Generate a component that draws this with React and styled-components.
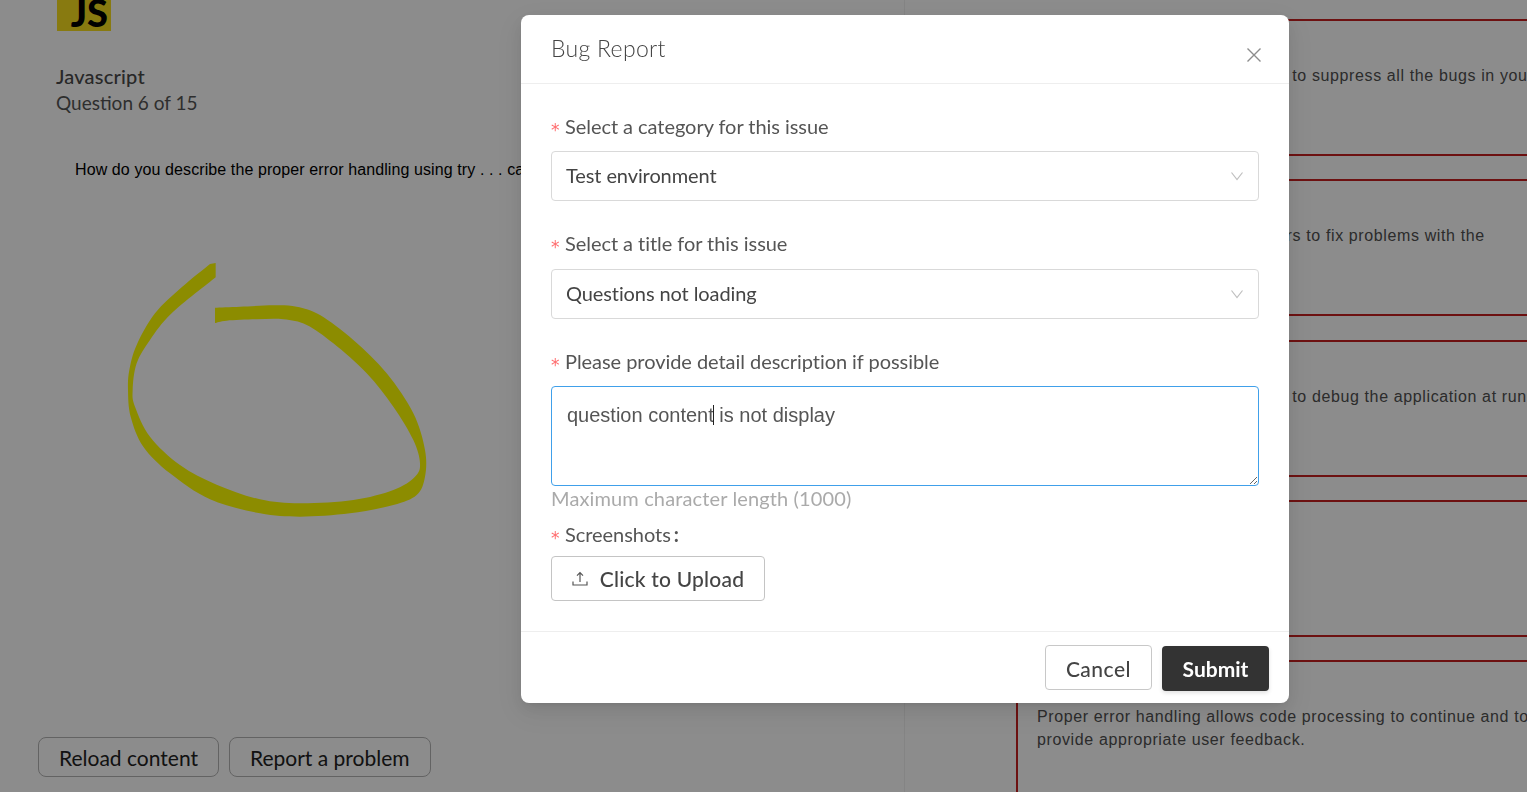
import styled, { createGlobalStyle } from "styled-components";

const UI_FONT = `"Lato", "Open Sans", sans-serif`;

const GlobalStyle = createGlobalStyle`
    * { box-sizing: border-box; }
    html, body { margin: 0; padding: 0; height: 100%; overflow: hidden; background: #fff; }
    body { font-family: ${UI_FONT}; }
`;

// hand-traced highlighter stroke, coordinates in the 1020x840 viewBox
const OUTER = [[330,42],[245,112],[165,190],[110,285],[88,360],[84,420],[92,500],[130,590],[210,670],[330,748],[480,790],[600,800],[750,790],[880,765],[950,735],[975,680],[975,600],[940,490],[860,370],[760,270],[660,195],[590,170],[520,166],[420,170],[345,173]];
const INNER = [[345,219],[380,212],[470,208],[550,208],[620,225],[700,280],[800,370],[880,470],[940,570],[960,640],[945,680],[880,720],[760,750],[600,760],[480,748],[350,704],[240,645],[150,560],[105,470],[98,420],[110,340],[150,270],[215,190],[347,82]];

const smooth = (pts) => {
    let d = "";
    for (let i = 0; i < pts.length - 1; i++) {
        const p0 = pts[i - 1] || pts[i];
        const p1 = pts[i];
        const p2 = pts[i + 1];
        const p3 = pts[i + 2] || p2;
        const c1 = [p1[0] + (p2[0] - p0[0]) / 6, p1[1] + (p2[1] - p0[1]) / 6];
        const c2 = [p2[0] - (p3[0] - p1[0]) / 6, p2[1] - (p3[1] - p1[1]) / 6];
        d += `C${c1[0]} ${c1[1]} ${c2[0]} ${c2[1]} ${p2[0]} ${p2[1]}`;
    }
    return d;
};
const strokePath = `M347 39L330 42${smooth(OUTER)}L345 219${smooth(INNER)}Z`;

const OPTIONS = [
    "Proper error handling allows you to suppress all the bugs in your application code.",
    "Error handling enables developers to fix problems with the application.",
    "Proper error handling allows you to debug the application at run time.",
    "Proper error handling is needed",
    "Proper error handling allows code processing to continue and to provide appropriate user feedback.",
];

export default function App() {
    return (
        <>
            <GlobalStyle />
            <Screen>
                <LeftPanel>
                    <JsLogo>JS</JsLogo>
                    <Subject>Javascript</Subject>
                    <Progress>Question 6 of 15</Progress>
                    <QuestionText>How do you describe the proper error handling using try . . . catch statements?</QuestionText>
                    <Drawing viewBox="0 0 1020 840">
                        <path d={strokePath} fill="#ffff00" />
                    </Drawing>
                    <LeftActions>
                        <GhostButton>Reload content</GhostButton>
                        <GhostButton>Report a problem</GhostButton>
                    </LeftActions>
                </LeftPanel>
                <RightPanel>
                    {OPTIONS.map((text) => (
                        <OptionBox key={text}>{text}</OptionBox>
                    ))}
                </RightPanel>
            </Screen>
            <Overlay>
                <Modal>
                    <ModalHeader>
                        <ModalTitle>Bug Report</ModalTitle>
                        <CloseIcon viewBox="0 0 16 16">
                            <path d="M1.5 1.5 14.5 14.5M14.5 1.5 1.5 14.5" />
                        </CloseIcon>
                    </ModalHeader>
                    <ModalBody>
                        <Label $gap={14}>Select a category for this issue</Label>
                        <SelectBox>
                            <span>Test environment</span>
                            <Chevron viewBox="0 0 14 10">
                                <path d="M1.5 1.5 7 8.5 12.5 1.5" />
                            </Chevron>
                        </SelectBox>
                        <Label $top={31} $gap={15}>Select a title for this issue</Label>
                        <SelectBox>
                            <span>Questions not loading</span>
                            <Chevron viewBox="0 0 14 10">
                                <path d="M1.5 1.5 7 8.5 12.5 1.5" />
                            </Chevron>
                        </SelectBox>
                        <Label $top={31} $gap={14}>Please provide detail description if possible</Label>
                        <TextAreaWrap>
                            <TextArea defaultValue="question content is not display" />
                            <Caret />
                        </TextAreaWrap>
                        <Hint>Maximum character length (1000)</Hint>
                        <Label $top={14} $gap={11}>Screenshots<Colon>:</Colon></Label>
                        <UploadButton>
                            <UploadIcon viewBox="0 0 16 16">
                                <path d="M8 11V2M5 4.6 8 1.6l3 3M1 10.5V14h14v-3.5" />
                            </UploadIcon>
                            Click to Upload
                        </UploadButton>
                    </ModalBody>
                    <ModalFooter>
                        <CancelButton>Cancel</CancelButton>
                        <SubmitButton>Submit</SubmitButton>
                    </ModalFooter>
                </Modal>
            </Overlay>
        </>
    );
}

const Screen = styled.div`
    display: flex;
    height: 792px;
    overflow: hidden;
    background: #fff;
`;
const LeftPanel = styled.div`
    width: 905px;
    flex: none;
    display: flex;
    flex-direction: column;
    padding: 0 0 15px 56px;
    border-right: 1px solid #f0f0f0;
`;
const JsLogo = styled.div`
    width: 54px;
    height: 31px;
    margin-left: 1px;
    background: #f7df1e;
    color: #000;
    font-family: "Lato", sans-serif;
    font-weight: 900;
    font-size: 38px;
    line-height: 24px;
    text-align: right;
    padding-right: 3px;
    overflow: hidden;
`;
const Subject = styled.div`
    margin-top: 32px;
    font-size: 20px;
    line-height: 26px;
    letter-spacing: 0.2px;
    font-weight: 500;
    color: #4a4a4a;
`;
const Progress = styled.div`
    margin-top: 1px;
    font-size: 19px;
    line-height: 26px;
    color: #555;
`;
const QuestionText = styled.div`
    margin: 44px 0 0 19px;
    white-space: nowrap;
    font-family: "Liberation Sans", Arial, sans-serif;
    font-size: 16px;
    line-height: 20px;
    letter-spacing: 0.1px;
    color: #000;
`;
const Drawing = styled.svg`
    display: block;
    width: 340px;
    height: 280px;
    margin: 70px 0 0 44px;
`;
const LeftActions = styled.div`
    margin: auto 0 0 -18px;
    display: flex;
    gap: 10px;
`;
const GhostButton = styled.button`
    height: 40px;
    padding: 1px 20px 0;
    background: #fff;
    border: 1px solid #b5b5b5;
    border-radius: 8px;
    font-family: ${UI_FONT};
    font-size: 21px;
    color: #222;
`;
const RightPanel = styled.div`
    flex: 1;
    min-width: 0;
    display: flex;
    flex-direction: column;
    gap: 23.25px;
    padding: 19px 0 0 111px;
`;
const OptionBox = styled.div`
    flex: none;
    width: 550px;
    height: 137px;
    padding: 43px 30px 0 19px;
    border: 2px solid #c62020;
    font-family: "Liberation Sans", Arial, sans-serif;
    font-size: 16px;
    line-height: 23px;
    letter-spacing: 0.62px;
    color: #505050;
`;
const Overlay = styled.div`
    position: fixed;
    inset: 0;
    padding: 15px 0 0 521px;
    background: rgba(0, 0, 0, 0.45);
`;
const Modal = styled.div`
    width: 768px;
    height: 688px;
    display: flex;
    flex-direction: column;
    background: #fff;
    border-radius: 8px;
    box-shadow: 0 6px 16px rgba(0, 0, 0, 0.08), 0 3px 6px -4px rgba(0, 0, 0, 0.12), 0 9px 28px 8px rgba(0, 0, 0, 0.05);
`;
const ModalHeader = styled.div`
    position: relative;
    height: 69px;
    flex: none;
    padding: 20px 30px 0;
    border-bottom: 1px solid #eee;
`;
const ModalTitle = styled.div`
    font-size: 23px;
    font-weight: 300;
    line-height: 26px;
    letter-spacing: 0.3px;
    color: #444;
`;
const CloseIcon = styled.svg`
    position: absolute;
    top: 32px;
    right: 27px;
    width: 16px;
    height: 16px;
    fill: none;
    stroke: #8c8c8c;
    stroke-width: 1.4;
`;
const ModalBody = styled.div`
    flex: 1;
    padding: 31px 30px 0;
`;
const Label = styled.div`
    height: 22px;
    margin: ${(p) => p.$top || 0}px 0 ${(p) => p.$gap || 13}px;
    font-size: 20px;
    line-height: 22px;
    letter-spacing: -0.05px;
    color: #555;
    &::before {
        content: "*";
        display: inline-block;
        width: 14px;
        line-height: 1;
        vertical-align: -2px;
        color: #ff6b6d;
        font-family: "DejaVu Sans", sans-serif;
        font-size: 17px;
    }
`;
const Colon = styled.span`
    margin-left: 3px;
    font-weight: 700;
`;
const SelectBox = styled.div`
    height: 50px;
    display: flex;
    align-items: center;
    justify-content: space-between;
    padding: 0 14px;
    border: 1px solid #d9d9d9;
    border-radius: 4px;
    font-size: 20px;
    letter-spacing: -0.1px;
    color: #444;
    & > span {
        margin-top: -2px;
    }
`;
const Chevron = styled.svg`
    width: 14px;
    height: 10px;
    fill: none;
    stroke: #bfbfbf;
    stroke-width: 1.2;
`;
const TextAreaWrap = styled.div`
    position: relative;
    height: 100px;
`;
const TextArea = styled.textarea`
    display: block;
    width: 100%;
    height: 100%;
    padding: 15px;
    border: 1px solid #40a0ea;
    border-radius: 4px;
    outline: none;
    font-family: "Liberation Sans", Arial, sans-serif;
    font-size: 20px;
    line-height: 26px;
    color: #555;
`;
const Caret = styled.span`
    position: absolute;
    left: 162px;
    top: 19px;
    width: 1px;
    height: 20px;
    background: #222;
`;
const Hint = styled.div`
    margin-top: 1px;
    font-size: 20px;
    line-height: 22px;
    letter-spacing: 0.13px;
    color: #aaa;
`;
const UploadButton = styled.button`
    width: 214px;
    height: 45px;
    display: flex;
    align-items: center;
    justify-content: center;
    gap: 12px;
    background: #fff;
    border: 1px solid #c4c4c4;
    border-radius: 4px;
    font-family: ${UI_FONT};
    font-size: 21px;
    letter-spacing: 0.2px;
    font-weight: 500;
    color: #444;
`;
const UploadIcon = styled.svg`
    width: 16px;
    height: 16px;
    fill: none;
    stroke: #555;
    stroke-width: 1.2;
`;
const ModalFooter = styled.div`
    height: 72px;
    flex: none;
    display: flex;
    justify-content: flex-end;
    align-items: flex-start;
    gap: 10px;
    padding: 13px 20px 0 0;
    border-top: 1px solid #eee;
`;
const CancelButton = styled.button`
    width: 107px;
    height: 45px;
    padding-top: 2px;
    background: #fff;
    border: 1px solid #c8c8c8;
    border-radius: 4px;
    font-family: ${UI_FONT};
    font-size: 21px;
    letter-spacing: 0.5px;
    font-weight: 500;
    color: #444;
`;
const SubmitButton = styled.button`
    width: 107px;
    height: 45px;
    margin-top: 1px;
    background: #333;
    border: none;
    border-radius: 4px;
    box-shadow: 0 2px 4px rgba(0, 0, 0, 0.12);
    font-family: ${UI_FONT};
    font-size: 21px;
    font-weight: 700;
    color: #fff;
`;
